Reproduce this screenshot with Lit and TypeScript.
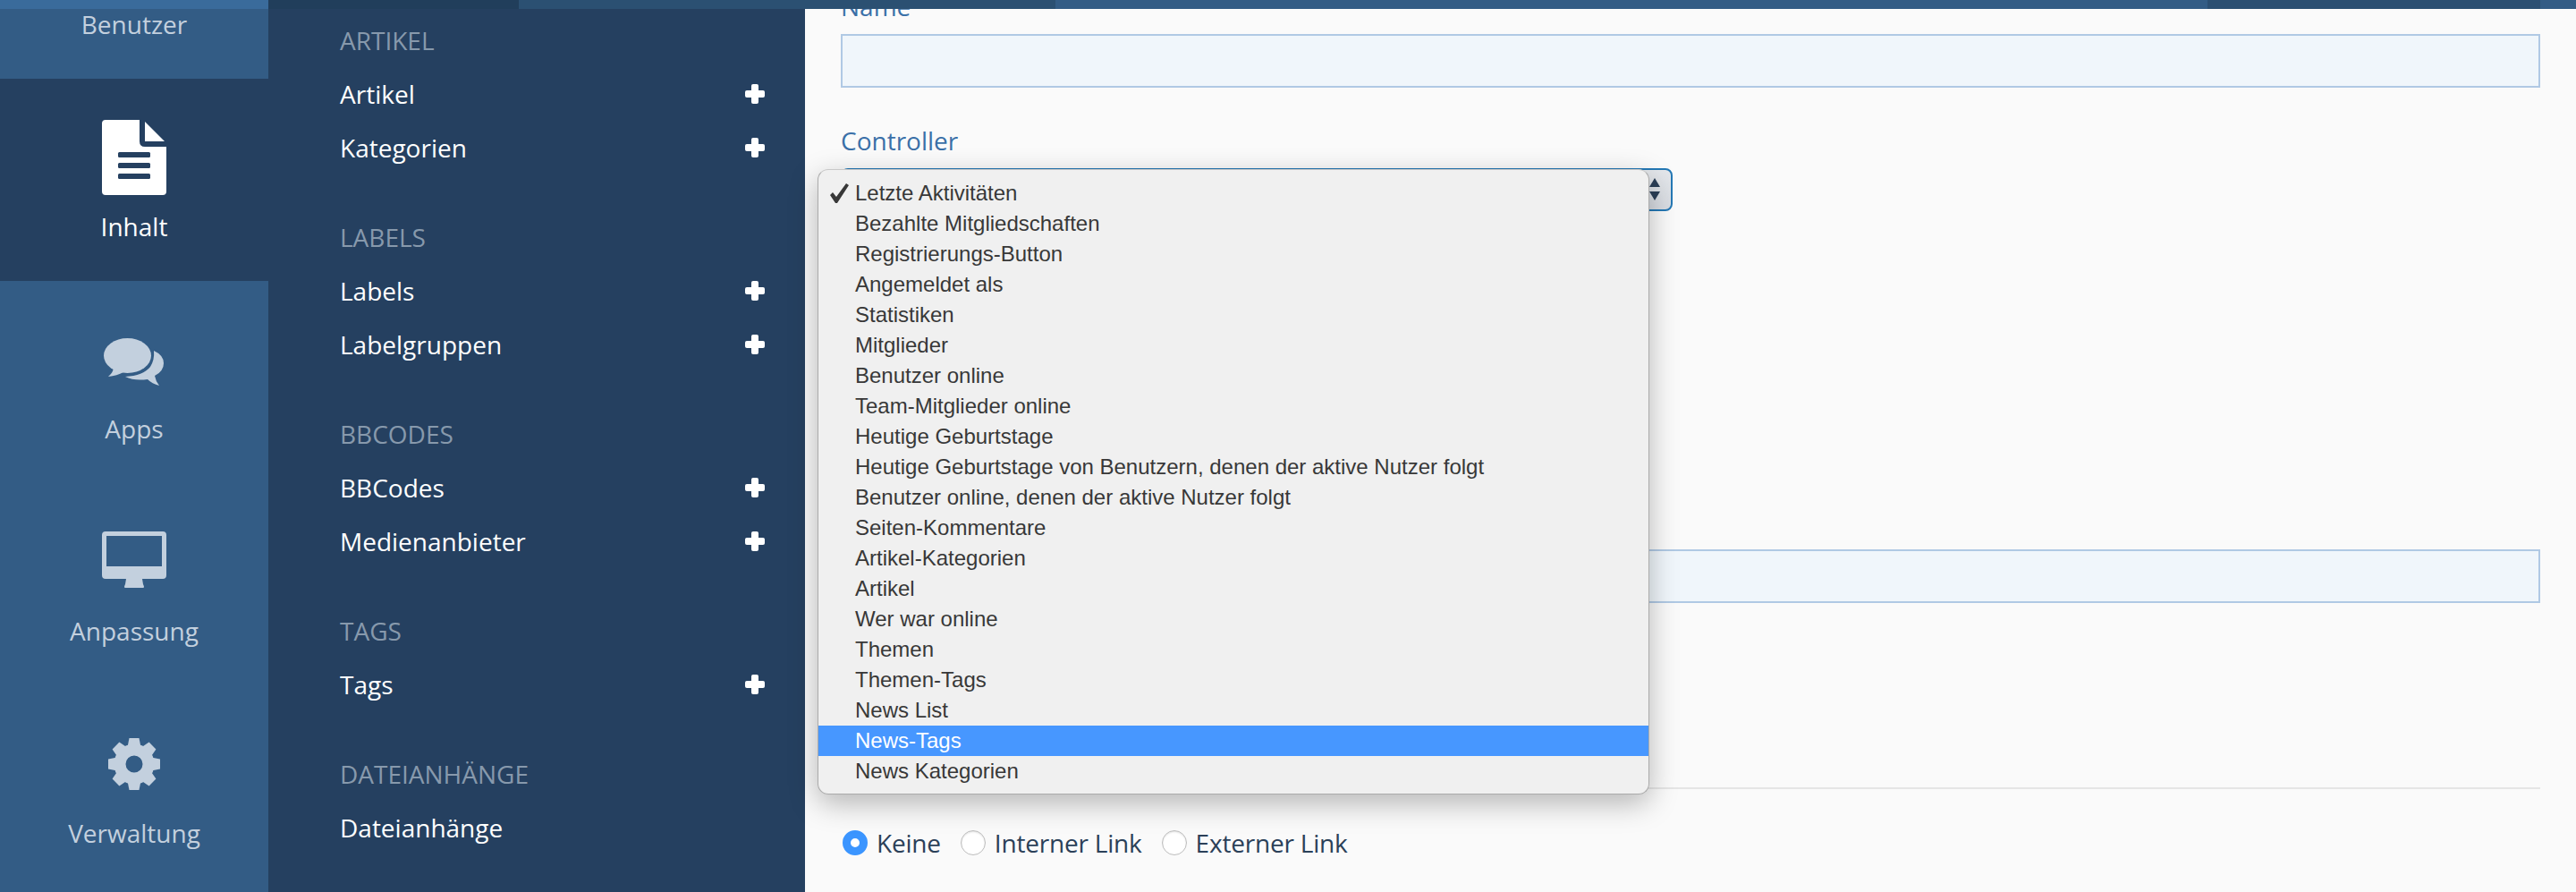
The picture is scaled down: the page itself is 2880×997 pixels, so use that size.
import { LitElement, html, css, svg } from "lit";
import { customElement } from "lit/decorators.js";

const cogAngles = [0, 45, 90, 135, 180, 225, 270, 315];

const ICONS: Record<string, unknown> = {
  file: html`<svg class="ico" viewBox="0 0 100 84" aria-hidden="true">
    <path fill="currentColor" d="M18 0H56V24Q56 30 62 30H86V80Q86 84 82 84H18Q14 84 14 80V4Q14 0 18 0Z" />
    <path fill="currentColor" d="M62 2L84 24H62Z" />
    <rect class="cut" x="32" y="36" width="36" height="6" rx="1.5" />
    <rect class="cut" x="32" y="48" width="36" height="6" rx="1.5" />
    <rect class="cut" x="32" y="60" width="36" height="6" rx="1.5" />
  </svg>`,
  comments: html`<svg class="ico" viewBox="0 0 100 84" aria-hidden="true">
    <ellipse fill="currentColor" cx="42.5" cy="37.5" rx="26.5" ry="19.5" />
    <path fill="currentColor" d="M27 50Q27 56 21 61Q31 60 38 56Z" />
    <path fill="currentColor" d="M72 32Q83 37 83 46Q83 55 73 60Q74 66 78 71Q70 69 65 64Q50 66 40 61Q60 60 68 50Q73 42 72 32Z" />
  </svg>`,
  desktop: html`<svg class="ico" viewBox="0 0 100 84" aria-hidden="true">
    <path fill="currentColor" fill-rule="evenodd" d="M18 8H82Q86 8 86 12V57Q86 61 82 61H18Q14 61 14 57V12Q14 8 18 8ZM19 13V47H81V13Z" />
    <path fill="currentColor" d="M41 61H59L60 67Q62 71 60 71H40Q38 71 40 67Z" />
  </svg>`,
  cog: html`<svg class="ico" viewBox="0 0 100 84" aria-hidden="true">
    <circle cx="50" cy="42" r="16" fill="none" stroke="currentColor" stroke-width="13" />
    ${cogAngles.map(
      (a) => svg`<path fill="currentColor" transform="translate(50 42) rotate(${a})" d="M-7.5 -19L-5.5 -29H5.5L7.5 -19Z" />`
    )}
  </svg>`,
};

const RAIL = [
  { label: "Benutzer", icon: "" },
  { label: "Inhalt", icon: "file", active: true },
  { label: "Apps", icon: "comments" },
  { label: "Anpassung", icon: "desktop" },
  { label: "Verwaltung", icon: "cog" },
  { label: "", icon: "" },
];

const SECTIONS = [
  { title: "ARTIKEL", items: [["Artikel", true], ["Kategorien", true]] },
  { title: "LABELS", items: [["Labels", true], ["Labelgruppen", true]] },
  { title: "BBCODES", items: [["BBCodes", true], ["Medienanbieter", true]] },
  { title: "TAGS", items: [["Tags", true]] },
  { title: "DATEIANHÄNGE", items: [["Dateianhänge", false]] },
];

const OPTIONS = [
  "Letzte Aktivitäten",
  "Bezahlte Mitgliedschaften",
  "Registrierungs-Button",
  "Angemeldet als",
  "Statistiken",
  "Mitglieder",
  "Benutzer online",
  "Team-Mitglieder online",
  "Heutige Geburtstage",
  "Heutige Geburtstage von Benutzern, denen der aktive Nutzer folgt",
  "Benutzer online, denen der aktive Nutzer folgt",
  "Seiten-Kommentare",
  "Artikel-Kategorien",
  "Artikel",
  "Wer war online",
  "Themen",
  "Themen-Tags",
  "News List",
  "News-Tags",
  "News Kategorien",
];

@customElement("app-root")
export class AppRoot extends LitElement {
  static styles = css`
    :host {
      display: block;
      width: 2880px;
      height: 997px;
      overflow: hidden;
      font-family: "Open Sans", sans-serif;
      font-size: 28px;
    }
    .top {
      display: grid;
      grid-template-columns: 300px 280px 600px 1288px 372px 1fr;
      height: 10px;
      position: relative;
      z-index: 2;
    }
    .t1 { background: #3a6b9b; }
    .t2 { background: #213e5b; }
    .t3 { background: #2b5072; }
    .t4 { background: #335c85; }
    .t5 { background: #2b4f72; }
    .body {
      display: flex;
      height: 987px;
      overflow: hidden;
    }
    .rail {
      width: 300px;
      flex: none;
      background: #335c85;
      overflow: hidden;
    }
    .rail-inner {
      margin-top: -148px;
    }
    .rail-item {
      height: 226px;
      box-sizing: border-box;
      padding-top: 46px;
      display: flex;
      flex-direction: column;
      align-items: center;
      color: #c3d0de;
    }
    .rail-item.active {
      background: #254060;
      color: #fff;
    }
    .ico {
      width: 100px;
      height: 84px;
      display: block;
      flex: none;
    }
    .cut { fill: #254060; }
    .rail-label {
      margin-top: 16px;
      line-height: 38px;
    }
    .sub {
      width: 600px;
      flex: none;
      box-sizing: border-box;
      padding: 5px 45px 0 80px;
      background: #254060;
      color: #fff;
    }
    .section {
      margin-bottom: 40px;
    }
    .head {
      height: 60px;
      line-height: 60px;
      color: #8799ac;
    }
    .row {
      height: 60px;
      display: flex;
      align-items: center;
      justify-content: space-between;
    }
    .plus {
      width: 22px;
      height: 22px;
      display: block;
    }
    .main {
      flex: 1;
      box-sizing: border-box;
      padding: 0 40px;
      background: #fafafa;
      position: relative;
    }
    .form {
      margin-top: -22px;
    }
    .lbl {
      line-height: 38px;
      margin-bottom: 12px;
      color: #3a70a8;
    }
    .field {
      height: 60px;
      box-sizing: border-box;
      border: 2px solid #b0c9e4;
      background: #f0f6fb;
    }
    .gap1 {
      height: 40px;
    }
    .sel {
      position: relative;
      width: 930px;
      height: 48px;
      box-sizing: border-box;
      border: 2px solid #2478b5;
      border-radius: 8px;
      background: linear-gradient(#e4e7eb, #d8dce2);
    }
    .arrows {
      position: absolute;
      right: 12px;
      top: 9px;
      width: 12px;
      height: 27px;
      display: block;
    }
    .menu {
      position: absolute;
      left: -28px;
      top: -1px;
      width: 930px;
      box-sizing: border-box;
      padding: 9px 0 8px;
      background: #f0f0f0;
      border: 1px solid #ababab;
      border-top-color: #c8c8c8;
      border-radius: 12px;
      box-shadow: 0 10px 32px rgba(0, 0, 0, 0.28);
      font-family: "Liberation Sans", Arial, sans-serif;
      font-size: 24px;
      color: #383838;
      z-index: 1;
      overflow: hidden;
    }
    .opt {
      position: relative;
      height: 34px;
      line-height: 34px;
      padding-left: 41px;
      white-space: nowrap;
    }
    .opt.hl {
      background: #4797ff;
      color: #fff;
    }
    .check {
      position: absolute;
      left: 12px;
      top: 5px;
      width: 23px;
      height: 24px;
      display: block;
    }
    .gap2 {
      height: 378px;
    }
    .gap3 {
      height: 206px;
    }
    .hr {
      height: 2px;
      background: #e5e5e5;
    }
    .radios {
      margin-top: 41px;
      margin-left: 2px;
      display: flex;
      align-items: center;
      gap: 22px;
      color: #2b4058;
      letter-spacing: -0.2px;
    }
    .radio {
      display: flex;
      align-items: center;
      gap: 10px;
      line-height: 38px;
    }
    .dot {
      width: 28px;
      height: 28px;
      box-sizing: border-box;
      border-radius: 50%;
      border: 1px solid #bdbdbd;
      background: #fff;
      box-shadow: inset 0 1px 2px rgba(0, 0, 0, 0.12);
      flex: none;
    }
    .dot.on {
      border: 9px solid #3b95ff;
      box-shadow: none;
    }
  `;

  render() {
    return html`
      <div class="top">
        <div class="t1"></div><div class="t2"></div><div class="t3"></div>
        <div class="t4"></div><div class="t5"></div><div class="t4"></div>
      </div>
      <div class="body">
        <nav class="rail">
          <div class="rail-inner">
            ${RAIL.map(
              (r) => html`<div class="rail-item ${r.active ? "active" : ""}">
                ${r.icon ? ICONS[r.icon] : html`<div class="ico"></div>`}
                <div class="rail-label">${r.label}</div>
              </div>`
            )}
          </div>
        </nav>
        <nav class="sub">
          ${SECTIONS.map(
            (s) => html`<div class="section">
              <div class="head">${s.title}</div>
              ${s.items.map(
                ([name, add]) => html`<div class="row">
                  <span>${name}</span>
                  ${add
                    ? html`<svg class="plus" viewBox="0 0 22 22" aria-hidden="true">
                        <rect x="7" y="0" width="8" height="22" rx="2" fill="#fff" />
                        <rect x="0" y="7" width="22" height="8" rx="2" fill="#fff" />
                      </svg>`
                    : ""}
                </div>`
              )}
            </div>`
          )}
        </nav>
        <main class="main">
          <div class="form">
            <div class="lbl">Name</div>
            <div class="field"></div>
            <div class="gap1"></div>
            <div class="lbl">Controller</div>
            <div class="sel">
              <svg class="arrows" viewBox="0 0 12 27" aria-hidden="true">
                <path d="M6 0L12 10H0Z" fill="#2c4058" />
                <path d="M0 15H12L6 25Z" fill="#2c4058" />
              </svg>
              <div class="menu">
                ${OPTIONS.map(
                  (o, i) => html`<div class="opt ${i === 18 ? "hl" : ""}">
                    ${i === 0
                      ? html`<svg class="check" viewBox="0 0 23 24" aria-hidden="true">
                          <path d="M1 14L4 11L8 16L19 1L22 3L9 23H7Z" fill="#383838" />
                        </svg>`
                      : ""}${o}
                  </div>`
                )}
              </div>
            </div>
            <div class="gap2"></div>
            <div class="field"></div>
            <div class="gap3"></div>
            <div class="hr"></div>
            <div class="radios">
              <label class="radio"><span class="dot on"></span>Keine</label>
              <label class="radio"><span class="dot"></span>Interner Link</label>
              <label class="radio"><span class="dot"></span>Externer Link</label>
            </div>
          </div>
        </main>
      </div>
    `;
  }
}
